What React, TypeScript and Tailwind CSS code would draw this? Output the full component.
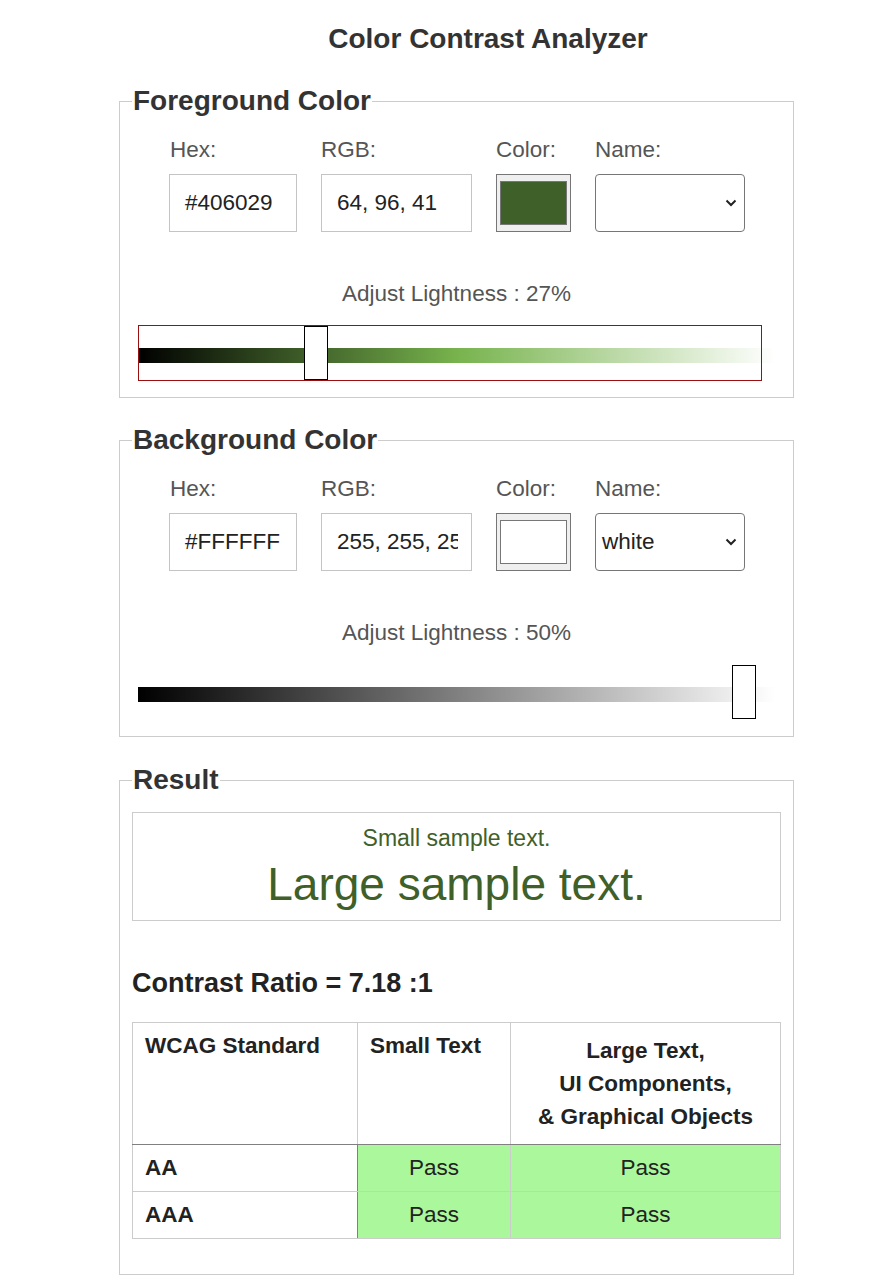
import React from "react";

interface ColorPanel {
  title: string;
  hex: string;
  rgb: string;
  swatch: string;
  name: string;
  lightness: number;
  thumbLeft: number;
  track: string;
  focused?: boolean;
}

const panels: ColorPanel[] = [
  {
    title: "Foreground Color",
    hex: "#406029",
    rgb: "64, 96, 41",
    swatch: "#406029",
    name: "",
    lightness: 27,
    thumbLeft: 166,
    track: "linear-gradient(to right, #000000 0%, #77b34d 50%, #ffffff 100%)",
    focused: true,
  },
  {
    title: "Background Color",
    hex: "#FFFFFF",
    rgb: "255, 255, 255",
    swatch: "#ffffff",
    name: "white",
    lightness: 50,
    thumbLeft: 594,
    track: "linear-gradient(to right, #000000 0%, #ffffff 100%)",
  },
];

const Chevron = () => (
  <svg width="12" height="8" viewBox="0 0 12 8" fill="none">
    <path d="M1.5 1.5 L6 6 L10.5 1.5" stroke="#222" strokeWidth="2" />
  </svg>
);

const Panel: React.FC<{ p: ColorPanel }> = ({ p }) => (
  <fieldset className="border border-[#cccccc] px-[12px] pb-[16px] w-[675px]">
    <legend className="px-[1px] text-[28px] leading-[32px] font-bold text-[#333]">{p.title}</legend>

    {/* inputs */}
    <div className="flex gap-[24px] ml-[37px] mt-[20px] text-[22.5px] text-[#555]">
      <div className="flex flex-col">
        <span className="leading-[26px] pl-[1px]">Hex:</span>
        <div className="mt-[11px] w-[128px] h-[58px] border border-[#c4c4c4] flex items-center pl-[15px] text-[#222]">
          {p.hex}
        </div>
      </div>
      <div className="flex flex-col">
        <span className="leading-[26px]">RGB:</span>
        <div className="mt-[11px] w-[151px] h-[58px] border border-[#c4c4c4] flex items-center pl-[15px] pr-[13px] text-[#222]">
          <div className="overflow-hidden whitespace-nowrap">{p.rgb}</div>
        </div>
      </div>
      <div className="flex flex-col">
        <span className="leading-[26px]">Color:</span>
        <div className="mt-[11px] w-[75px] h-[58px] border border-[#767676] bg-[#efefef] px-[3px] py-[6px]">
          <div className="w-full h-full border border-[#777]" style={{ backgroundColor: p.swatch }} />
        </div>
      </div>
      <div className="flex flex-col">
        <span className="leading-[26px]">Name:</span>
        <div className="mt-[11px] w-[150px] h-[58px] border border-[#767676] rounded-[4px] flex items-center justify-between pl-[6px] pr-[7px] text-[#222]">
          <span>{p.name}</span>
          <Chevron />
        </div>
      </div>
    </div>

    {/* lightness */}
    <div className="mt-[49px] text-center text-[22.5px] leading-[26px] text-[#555]">
      Adjust Lightness : {p.lightness}%
    </div>
    <div className="relative mt-[18px] ml-[6px] w-[637px] h-[56px] flex items-center">
      <div className="w-full h-[15px] mt-[4px]" style={{ background: p.track }} />
      {p.focused && (
        <div className="absolute left-0 top-0 w-[624px] h-[56px] border border-[#9a1010]" />
      )}
      <div
        className="absolute top-[1px] w-[24px] h-[54px] bg-white border border-black"
        style={{ left: p.thumbLeft }}
      />
    </div>
  </fieldset>
);

const App: React.FC = () => {
  return (
    <div className="min-h-screen bg-white font-['Liberation_Sans',Arial,sans-serif] pb-[8px]">
      <h1 className="pt-[23px] pl-[86px] text-center text-[28px] leading-[32px] font-bold text-[#333]">
        Color Contrast Analyzer
      </h1>

      <div className="ml-[119px] mt-[30px] flex flex-col gap-[26px]">
        {panels.map((p) => (
          <Panel key={p.title} p={p} />
        ))}

        {/* Result */}
        <fieldset className="mt-[1px] border border-[#cccccc] px-[12px] pb-[35px] w-[675px]">
          <legend className="px-[1px] text-[28px] leading-[32px] font-bold text-[#333]">Result</legend>
          <div className="mt-[16px] border border-[#cccccc] pt-[12px] pb-[9px] text-center text-[#406029]">
            <div className="text-[23px] leading-[26px]">Small sample text.</div>
            <div className="mt-[7px] text-[46px] leading-[53px]">Large sample text.</div>
          </div>

          <div className="mt-[47px] text-[27px] leading-[31px] font-bold text-[#222]">Contrast Ratio = 7.18 :1</div>

          <table className="mt-[23px] w-full border-collapse text-[22.5px] text-[#222]">
            <thead>
              <tr className="border-b border-b-[#808080]">
                <th className="w-[225px] border border-[#cccccc] border-b-[#808080] align-top text-left font-bold pl-[12px] pt-[10px] leading-[26px]">
                  WCAG Standard
                </th>
                <th className="w-[153px] border border-[#cccccc] border-b-[#808080] align-top text-left font-bold pl-[12px] pt-[10px] leading-[26px]">
                  Small Text
                </th>
                <th className="border border-[#cccccc] border-b-[#808080] text-center font-bold py-[11px] leading-[33px]">
                  Large Text,
                  <br />
                  UI Components,
                  <br />
                  &amp; Graphical Objects
                </th>
              </tr>
            </thead>
            <tbody>
              {["AA", "AAA"].map((level) => (
                <tr key={level}>
                  <td className="border border-[#cccccc] border-r-[#808080] font-bold pl-[12px] py-[10px] leading-[26px]">
                    {level}
                  </td>
                  <td className="border border-[#cccccc] bg-[#abf79b] text-center py-[10px] leading-[26px]">Pass</td>
                  <td className="border border-[#cccccc] bg-[#abf79b] text-center py-[10px] leading-[26px]">Pass</td>
                </tr>
              ))}
            </tbody>
          </table>
        </fieldset>
      </div>
    </div>
  );
};

export default App;
